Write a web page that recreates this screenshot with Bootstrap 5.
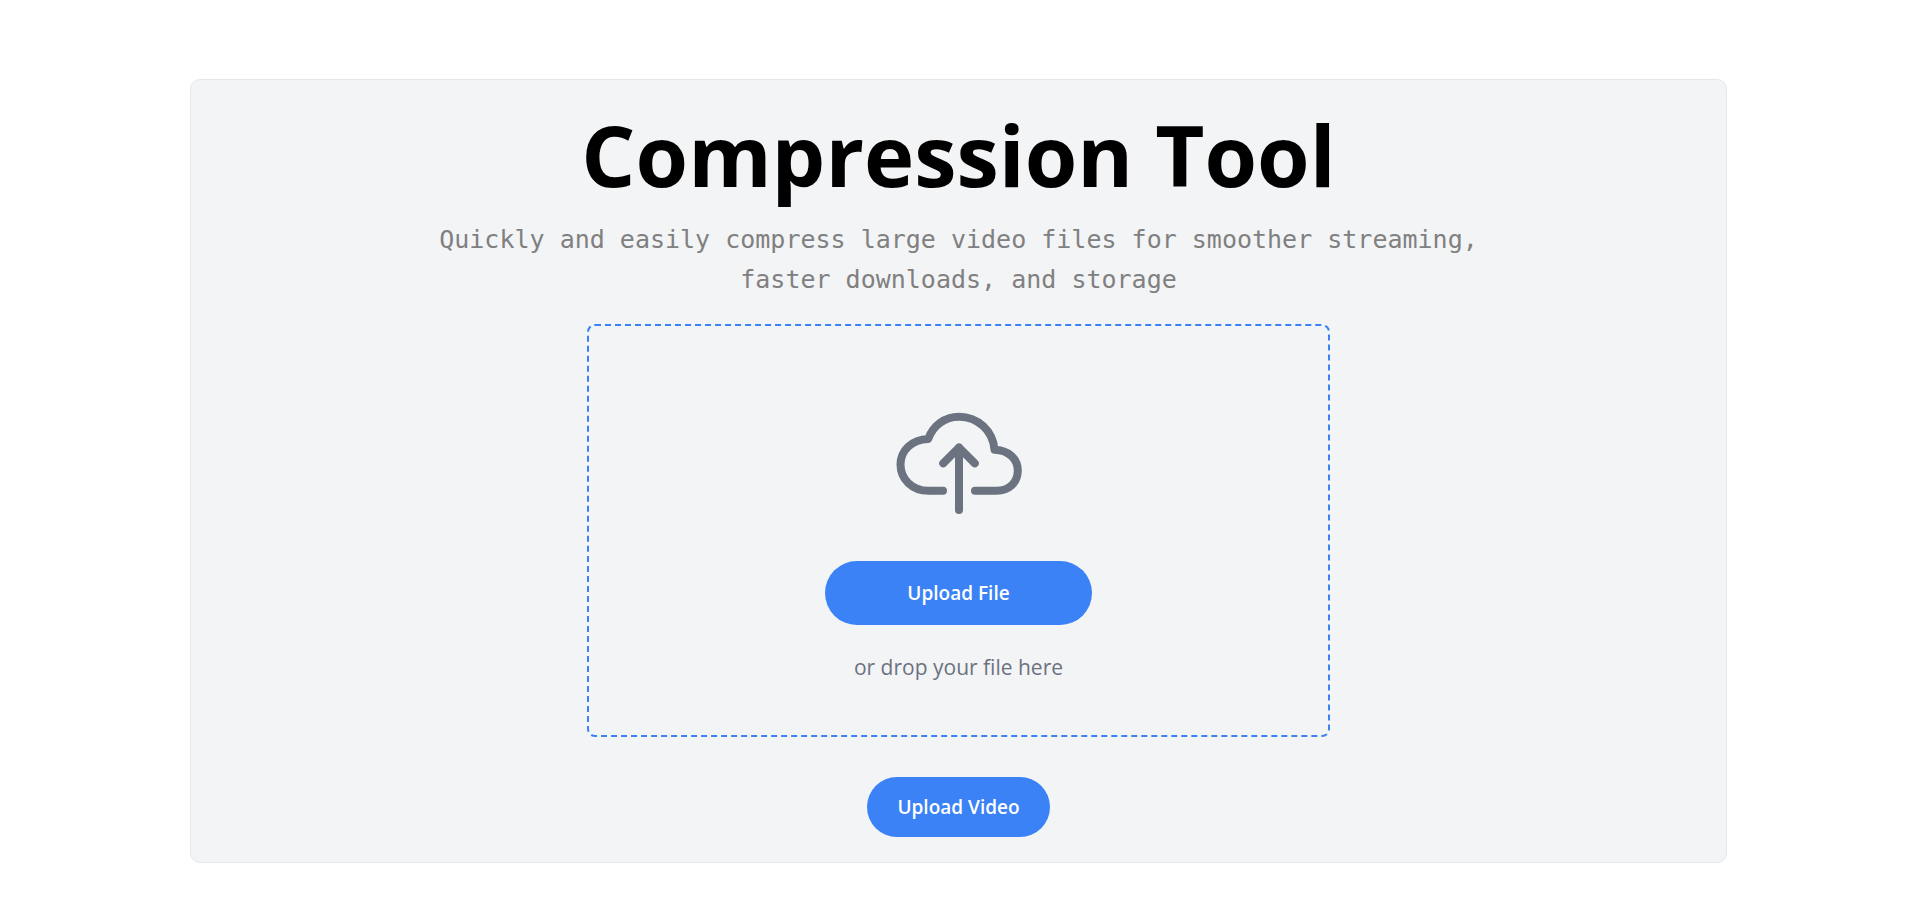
<!DOCTYPE html>
<html lang="en">
<head>
<meta charset="utf-8">
<meta name="viewport" content="width=device-width, initial-scale=1">
<title>Compression Tool</title>
<link rel="stylesheet" href="https://cdn.jsdelivr.net/npm/bootstrap@5.3.0/dist/css/bootstrap.min.css">
<style>
  body { font-family: "Open Sans", "Noto Sans", sans-serif; background: #fff; }
  .tool-panel { max-width: 1537px; margin-top: 79px; padding-top: 26px; padding-bottom: 25px; background: #f3f4f6; border: 1px solid #e5e7eb; border-radius: 10px; }
  .tool-title { font-size: 85px; line-height: 96px; margin-bottom: 18px; font-weight: 700; color: #000; }
  .tool-intro { max-width: 1056px; font-family: "DejaVu Sans Mono", monospace; font-size: 25px; line-height: 40px; color: #808080; }
  .drop-zone { max-width: 743px; padding: 73px 16px 52px; border: 2px dashed #3b82f6; border-radius: 8px; color: #6b7280; }
  .drop-hint { font-size: 21px; line-height: 32px; }
  .btn-pill { --bs-btn-color: #fff; --bs-btn-bg: #3b82f6; --bs-btn-hover-color: #fff; --bs-btn-hover-bg: #2563eb; --bs-btn-active-color: #fff; --bs-btn-active-bg: #1d4ed8; --bs-btn-border-width: 0; font-size: 19px; font-weight: 600; line-height: 28px; padding: 16px 30px; }
  .btn-pick { width: 267px; max-width: 100%; padding: 18px 30px; margin: 34px 0 26px; }
  .btn-send { margin-top: 40px; }
</style>
</head>
<body>
<main class="container-fluid px-3 px-xl-5">
  <section class="tool-panel mx-auto px-3 d-flex flex-column align-items-center text-center">
    <h1 class="tool-title">Compression Tool</h1>
    <p class="tool-intro mb-4">Quickly and easily compress large video files for smoother streaming, faster downloads, and storage</p>
    <div class="drop-zone w-100 d-flex flex-column align-items-center">
      <svg width="128" height="128" viewBox="0 0 128 128" fill="none" stroke="currentColor" stroke-width="8" stroke-linecap="round" stroke-linejoin="round" aria-hidden="true">
        <path d="M48 91.700H33.500C17 91.700 5.500 80 5.500 65.500C5.500 51.500 17 40.500 33.200 40C38 26.500 50 17.700 64 17.700C83 17.700 98 32 99.500 50.700C113 51 122.800 59.500 122.800 71.500C122.800 83.500 114 91.700 101.500 91.700H80"/>
        <path d="M64 111V48.500M48.200 64.300L64 48.500L79.800 64.300"/>
      </svg>
      <button type="button" class="btn btn-pill btn-pick rounded-pill">Upload File</button>
      <p class="drop-hint mb-0">or drop your file here</p>
    </div>
    <button type="submit" class="btn btn-pill btn-send rounded-pill">Upload Video</button>
  </section>
</main>
<script src="https://cdn.jsdelivr.net/npm/bootstrap@5.3.0/dist/js/bootstrap.bundle.min.js"></script>
</body>
</html>
